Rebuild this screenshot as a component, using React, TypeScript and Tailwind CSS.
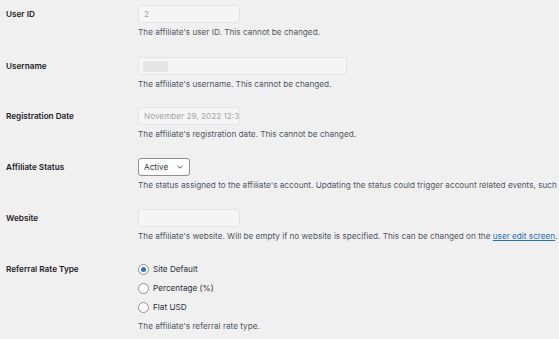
import React from "react";

const font = { fontFamily: "Inter, 'Noto Sans', sans-serif" };

function Label({ children }: { children: React.ReactNode }) {
  return (
    <div className="w-[138px] shrink-0 pl-[6px] h-[18px] flex items-center text-[8.2px] font-semibold text-[#1d2327]">
      {children}
    </div>
  );
}

function Desc({ children }: { children: React.ReactNode }) {
  return (
    <div className="mt-[3px] text-[8.2px] leading-[12px] text-[#50575e] whitespace-nowrap">{children}</div>
  );
}

function Input({ w, children }: { w: string; children?: React.ReactNode }) {
  return (
    <div
      className={`${w} h-[18px] rounded-[3px] border border-[#e4e4e6] bg-[#f5f5f6] flex items-center px-[5px] overflow-hidden whitespace-nowrap text-[8.2px] text-[#a2a5a8]`}
    >
      {children}
    </div>
  );
}

function Radio({ checked, label }: { checked?: boolean; label: string }) {
  return (
    <div className="flex items-center h-[19px]">
      <div className="w-[11px] h-[11px] rounded-full border border-[#8c8f94] bg-white flex items-center justify-center">
        {checked && <div className="w-[5px] h-[5px] rounded-full bg-[#2f74c0]" />}
      </div>
      <span className="ml-[4px] text-[8.2px] text-[#2c3338]">{label}</span>
    </div>
  );
}

export default function App() {
  return (
    <div className="w-[559px] h-[339px] bg-[#f0f0f1] overflow-hidden" style={font}>
      <div className="flex h-[51px] pt-[5px]">
        <Label>User ID</Label>
        <div>
          <Input w="w-[102px]">2</Input>
          <Desc>The affiliate's user ID. This cannot be changed.</Desc>
        </div>
      </div>
      <div className="flex h-[51px] pt-[6px]">
        <Label>Username</Label>
        <div>
          <Input w="w-[209px]">
            <div className="w-[25px] h-[11px] bg-[#e6e6e7] -ml-[1px]" />
          </Input>
          <Desc>The affiliate's username. This cannot be changed.</Desc>
        </div>
      </div>
      <div className="flex h-[51px] pt-[5px]">
        <Label>Registration Date</Label>
        <div>
          <Input w="w-[102px]">November 29, 2022 12:34 pm</Input>
          <Desc>The affiliate's registration date. This cannot be changed.</Desc>
        </div>
      </div>
      <div className="flex h-[51px] pt-[5px]">
        <Label>Affiliate Status</Label>
        <div className="min-w-0">
          <div className="w-[52px] h-[18px] rounded-[3px] border border-[#8c8f94] bg-white flex items-center justify-between pl-[5px] pr-[5px] text-[8.2px] text-[#2c3338]">
            <span>Active</span>
            <svg width="8" height="8" viewBox="0 0 8 8" fill="none">
              <path d="M1.5 2.8 L4 5.2 L6.5 2.8" stroke="#50575e" strokeWidth="1" />
            </svg>
          </div>
          <Desc>
            The status assigned to the affiliate's account. Updating the status could trigger account related events, such as email notifications.
          </Desc>
        </div>
      </div>
      <div className="flex h-[51px] pt-[5px]">
        <Label>Website</Label>
        <div>
          <Input w="w-[102px]" />
          <Desc>
            The affiliate's website. Will be empty if no website is specified. This can be changed on the{" "}
            <span className="text-[#2271b1] underline">user edit screen</span>.
          </Desc>
        </div>
      </div>
      <div className="flex pt-[5px]">
        <Label>Referral Rate Type</Label>
        <div className="-mt-[0.5px]">
          <Radio checked label="Site Default" />
          <Radio label="Percentage (%)" />
          <Radio label="Flat USD" />
          <Desc>The affiliate's referral rate type.</Desc>
        </div>
      </div>
    </div>
  );
}
